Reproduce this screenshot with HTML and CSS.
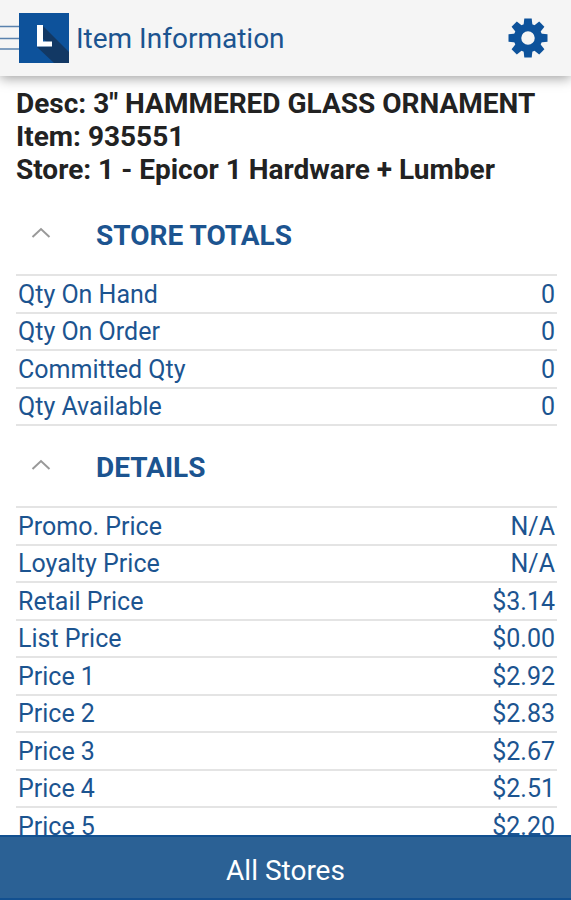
FILE: index.html
```html
<!DOCTYPE html>
<html lang="en">
<head>
  <meta charset="UTF-8">
  <meta name="viewport" content="width=device-width, initial-scale=1.0">
  <title>Item Information</title>
  <link rel="stylesheet" href="styles.css">
</head>
<body>
  <header class="topbar">
    <button class="menu-button" aria-label="Menu">
      <svg class="menu-lines" viewBox="0 0 19 50" aria-hidden="true">
        <path d="M0 13.500h19M0 25.500h19M0 36h19" stroke="#5a82ae" stroke-width="1.500"/>
      </svg>
      <svg class="logo" viewBox="0 0 50 50" aria-hidden="true">
        <rect width="50" height="50" fill="#0d529b"/>
        <path d="M24 13L50 39V50H35L18 34L33 33L24 26z" fill="#123864"/>
        <path d="M18 12h6v16.500h9V33.500H18z" fill="#fff"/>
      </svg>
    </button>
    <h1 class="title">Item Information</h1>
    <button class="settings-button" aria-label="Settings">
      <svg class="gear" viewBox="-20 -20 40 40" aria-hidden="true">
        <g fill="#0d529b">
          <path id="tooth" d="M-4.500 -12L-3.700 -19.500H3.700L4.500 -12z"/>
          <use href="#tooth" transform="rotate(45)"/>
          <use href="#tooth" transform="rotate(90)"/>
          <use href="#tooth" transform="rotate(135)"/>
          <use href="#tooth" transform="rotate(180)"/>
          <use href="#tooth" transform="rotate(225)"/>
          <use href="#tooth" transform="rotate(270)"/>
          <use href="#tooth" transform="rotate(315)"/>
        </g>
        <circle r="10.500" fill="none" stroke="#0d529b" stroke-width="7.500"/>
      </svg>
    </button>
  </header>

  <main class="content">
    <div class="item">
      <p>Desc: 3" HAMMERED GLASS ORNAMENT</p>
      <p>Item: 935551</p>
      <p>Store: 1 - Epicor 1 Hardware + Lumber</p>
    </div>

    <section class="section">
      <h2>
        <button class="section-toggle" aria-expanded="true">
          <svg class="chevron" viewBox="0 0 20 12" aria-hidden="true"><path d="M1.500 10L10 2L18.500 10"/></svg>
          STORE TOTALS
        </button>
      </h2>
      <table class="values">
        <tr><th scope="row">Qty On Hand</th><td>0</td></tr>
        <tr><th scope="row">Qty On Order</th><td>0</td></tr>
        <tr><th scope="row">Committed Qty</th><td>0</td></tr>
        <tr><th scope="row">Qty Available</th><td>0</td></tr>
      </table>
    </section>

    <section class="section">
      <h2>
        <button class="section-toggle" aria-expanded="true">
          <svg class="chevron" viewBox="0 0 20 12" aria-hidden="true"><path d="M1.500 10L10 2L18.500 10"/></svg>
          DETAILS
        </button>
      </h2>
      <table class="values">
        <tr><th scope="row">Promo. Price</th><td>N/A</td></tr>
        <tr><th scope="row">Loyalty Price</th><td>N/A</td></tr>
        <tr><th scope="row">Retail Price</th><td>$3.14</td></tr>
        <tr><th scope="row">List Price</th><td>$0.00</td></tr>
        <tr><th scope="row">Price 1</th><td>$2.92</td></tr>
        <tr><th scope="row">Price 2</th><td>$2.83</td></tr>
        <tr><th scope="row">Price 3</th><td>$2.67</td></tr>
        <tr><th scope="row">Price 4</th><td>$2.51</td></tr>
        <tr><th scope="row">Price 5</th><td>$2.20</td></tr>
      </table>
    </section>
  </main>

  <button class="all-stores">All Stores</button>
</body>
</html>
```

FILE: styles.css
```css
* {
  box-sizing: border-box;
}
body {
  margin: 0;
  height: 100vh;
  display: flex;
  flex-direction: column;
  font-family: Roboto, "Liberation Sans", sans-serif;
  color: #1c5490;
  background: #fff;
}
h1, h2, p {
  margin: 0;
}
button {
  font-family: inherit;
  color: inherit;
  background: none;
  border: 0;
  padding: 0;
  cursor: pointer;
}

/* top bar */
.topbar {
  display: flex;
  flex-shrink: 0;
  align-items: center;
  height: 76px;
  padding-right: 23px;
  background: #f5f5f5;
  box-shadow: 0 2px 12px rgba(0, 0, 0, 0.4);
  z-index: 1;
}
.menu-button {
  display: flex;
}
.menu-lines {
  width: 19px;
  height: 50px;
}
.logo {
  width: 50px;
  height: 50px;
}
.title {
  flex: 1;
  padding: 1px 0 0 7px;
  font-size: 28px;
  font-weight: 400;
}
.settings-button {
  display: flex;
}
.gear {
  width: 40px;
  height: 40px;
}

/* item details */
.content {
  flex: 1;
  min-height: 0;
  overflow-y: auto;
  scrollbar-width: none;
  padding: 11px 14px 0 16px;
}
.item {
  margin-bottom: 8px;
  font-size: 28px;
  font-weight: 700;
  line-height: 33px;
  color: #222;
}
.section-toggle {
  display: flex;
  align-items: center;
  gap: 45px;
  width: 100%;
  height: 80px;
  padding: 2px 0 0 15px;
  font-size: 28px;
  font-weight: 700;
}
.chevron {
  width: 20px;
  height: 12px;
  margin-bottom: 4px;
  fill: none;
  stroke: #999;
  stroke-width: 2;
}
.values {
  width: 100%;
  border-spacing: 0;
  border-top: 2px solid #e4e4e4;
  font-size: 25px;
}
.values th,
.values td {
  height: 38px;
  padding: 0 2px;
  border-bottom: 2px solid #e4e4e4;
  line-height: 35px;
}
.values tr:nth-child(even) > * {
  height: 37px;
}
.values th {
  font-weight: 400;
  text-align: left;
}
.values td {
  text-align: right;
}

/* bottom button */
.all-stores {
  flex-shrink: 0;
  height: 65px;
  padding-top: 5px;
  border-top: 2px solid #125090;
  border-bottom: 2px solid #125090;
  background: #2b6195;
  color: #fff;
  font-size: 28px;
}
```
